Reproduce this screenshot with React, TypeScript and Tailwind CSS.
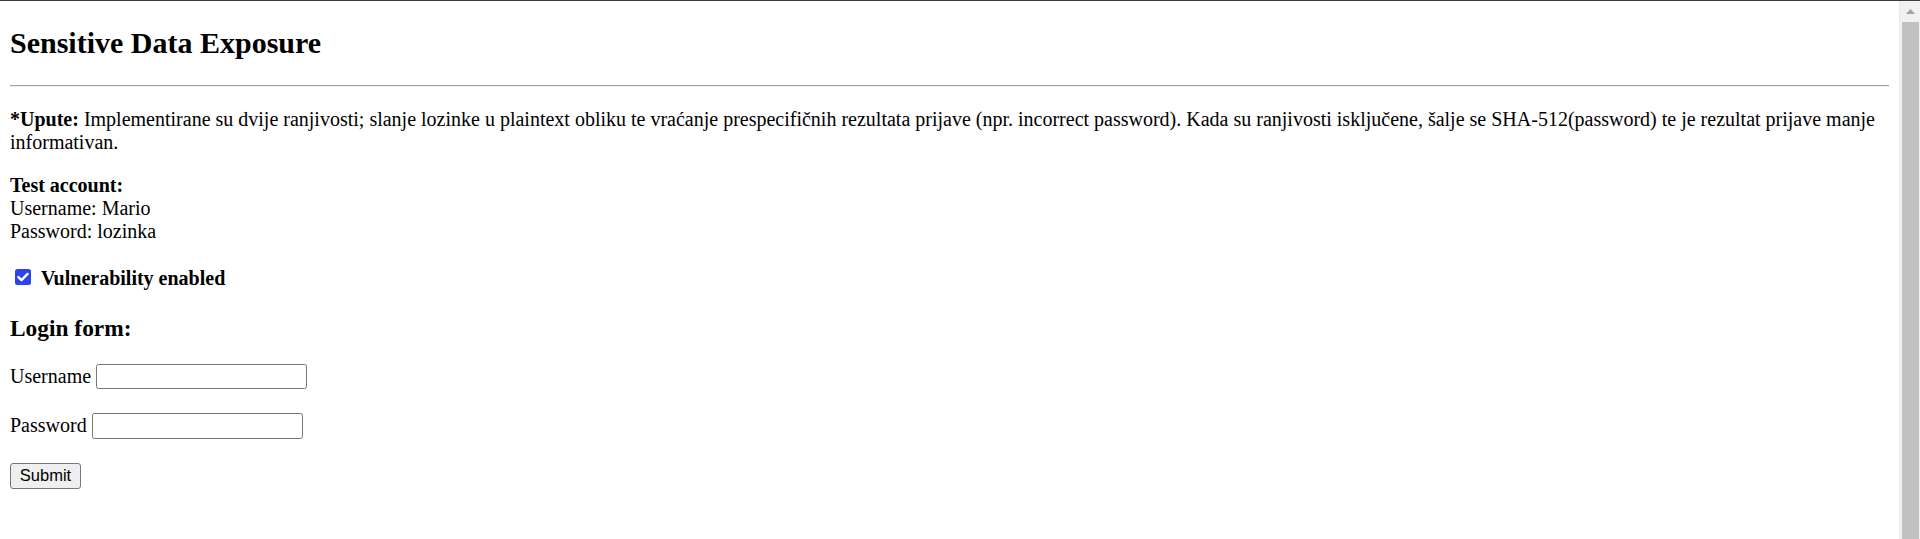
import { useState } from 'react';

const Scrollbar = () => (
  <aside className="w-[21px] shrink-0 flex flex-col items-center bg-[#f1f1f1] border-l border-[#e9e9e9]">
    <div className="h-[21px] w-full flex items-center justify-center">
      <svg width="9" height="5" viewBox="0 0 9 5">
        <polygon points="0,5 4.5,0 9,5" fill="#a3a3a3" />
      </svg>
    </div>
    <div className="flex-1 w-[17px] bg-[#c1c1c1]" />
  </aside>
);

export default function App() {
  const [vulnerable, setVulnerable] = useState(true);

  return (
    <div className="h-[539px] w-full flex flex-col overflow-hidden bg-white">
      <div className="h-px shrink-0 bg-[#3c3c3c]" />
      <div className="flex flex-1 min-h-0">
        <main className="flex-1 min-w-0 px-[10px] font-['Liberation_Serif','Times_New_Roman',serif] text-[20px] leading-[23px] text-black">
          <h2 className="mt-[25px] text-[30px] leading-[34.5px] font-bold">Sensitive Data Exposure</h2>

          <hr className="mt-[24px] h-[2px] border-0 border-t border-t-[#a0a0a0] border-b border-b-[#efefef]" />

          <p className="mt-[21px]">
            <b>*Upute:</b> Implementirane su dvije ranjivosti; slanje lozinke u plaintext obliku te vraćanje
            prespecifičnih rezultata prijave (npr. incorrect password). Kada su ranjivosti isključene, šalje se
            SHA-512(password) te je rezultat prijave manje informativan.
          </p>

          <p className="mt-[20px]">
            <b>Test account:</b>
            <br />
            Username: Mario
            <br />
            Password: lozinka
          </p>

          <label className="mt-[21px] h-[29px] flex items-center cursor-pointer">
            <span className="relative ml-[5px] mr-[10px] w-[16px] h-[16px] -mt-[3px]">
              <input
                type="checkbox"
                checked={vulnerable}
                onChange={(e) => setVulnerable(e.target.checked)}
                className="appearance-none block w-[16px] h-[16px] rounded-[2.5px] bg-white border border-[#767676] checked:border-0 checked:bg-[#2d43ec]"
              />
              {vulnerable && (
                <svg
                  className="absolute left-0 top-0 pointer-events-none"
                  width="16"
                  height="16"
                  viewBox="0 0 16 16"
                >
                  <path d="M3.4 8.1 L6.5 11.1 L12.6 4.9" fill="none" stroke="#ffffff" strokeWidth="2.4" strokeLinecap="round" strokeLinejoin="round" />
                </svg>
              )}
            </span>
            <b>Vulnerability enabled</b>
          </label>

          <h3 className="mt-[22px] text-[23.4px] leading-[27px] font-bold">Login form:</h3>

          <form className="mt-[22px] flex flex-col items-start gap-[24px]" onSubmit={(e) => e.preventDefault()}>
            <div className="flex items-center gap-[5px]">
              <span>Username</span>
              <input
                type="text"
                className="w-[211px] h-[25px] px-[3px] border border-[#767676] rounded-[2.5px] text-[16.5px] font-['Liberation_Sans',Arial,sans-serif] outline-none"
              />
            </div>
            <div className="flex items-center gap-[5px]">
              <span>Password</span>
              <input
                type="password"
                className="w-[211px] h-[26px] px-[3px] border border-[#767676] rounded-[2.5px] text-[16.5px] font-['Liberation_Sans',Arial,sans-serif] outline-none"
              />
            </div>
            <button
              type="submit"
              className="w-[71px] h-[26px] bg-[#efefef] border border-[#767676] rounded-[3px] text-[16.5px] leading-none font-['Liberation_Sans',Arial,sans-serif] text-black"
            >
              Submit
            </button>
          </form>
        </main>
        <Scrollbar />
      </div>
    </div>
  );
}
